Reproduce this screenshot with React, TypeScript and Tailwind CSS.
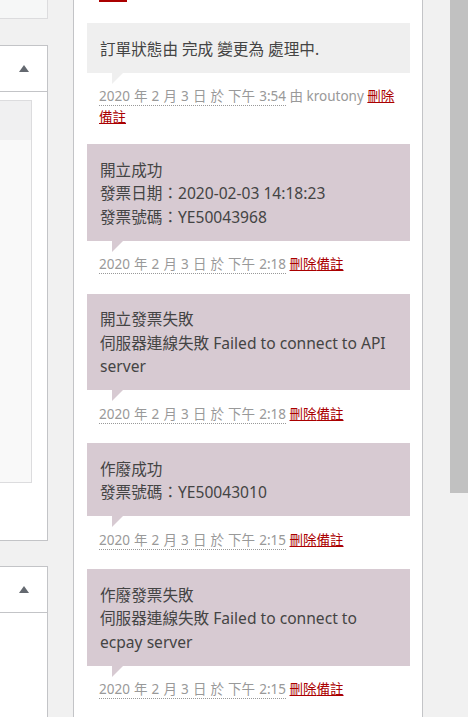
import React from 'react';

type Note = {
  kind: 'customer' | 'system';
  lines: string[];
  time: string;
  by?: string;
};

const notes: Note[] = [
  { kind: 'customer', lines: ['訂單狀態由 完成 變更為 處理中.'], time: '下午 3:54', by: 'kroutony' },
  { kind: 'system', lines: ['開立成功', '發票日期：2020-02-03 14:18:23', '發票號碼：YE50043968'], time: '下午 2:18' },
  { kind: 'system', lines: ['開立發票失敗', '伺服器連線失敗 Failed to connect to API', 'server'], time: '下午 2:18' },
  { kind: 'system', lines: ['作廢成功', '發票號碼：YE50043010'], time: '下午 2:15' },
  { kind: 'system', lines: ['作廢發票失敗', '伺服器連線失敗 Failed to connect to', 'ecpay server'], time: '下午 2:15' },
];

function Toggle() {
  return (
    <svg width="10" height="7" viewBox="0 0 10 7" className="ml-auto mr-[18px]">
      <polygon points="5,0 10,7 0,7" fill="#646970" />
    </svg>
  );
}

function NoteItem({ note }: { note: Note }) {
  const bg = note.kind === 'system' ? 'bg-[#d7cad2]' : 'bg-[#efefef]';
  const tip = note.kind === 'system' ? 'border-t-[#d7cad2]' : 'border-t-[#efefef]';
  return (
    <li className="list-none">
      <div className={`relative ${bg} px-[13px] pt-[14.5px] pb-[11.5px] text-[15.6px] leading-[23.5px] text-[#444]`}>
        {note.lines.map((l, i) => (
          <div key={i} className="whitespace-nowrap">{l}</div>
        ))}
        <span className={`absolute left-[25px] -bottom-[11px] h-0 w-0 border-t-[11px] border-r-[11px] border-r-transparent ${tip}`} />
      </div>
      <p className={`pl-[12px] pt-[13.5px] text-[13.5px] leading-[21px] text-[#999] ${note.by ? 'pb-[16px]' : 'pb-[18.5px]'}`}>
        <abbr className="no-underline border-b border-dotted border-[#999] [word-spacing:0.6px]" title="2020-02-03">
          2020 年 2 月 3 日 於 {note.time}
        </abbr>{' '}
        {note.by && <>由 {note.by} </>}
        <a className="text-[#a00] underline">
          刪除{note.by && <br />}備註
        </a>
      </p>
    </li>
  );
}

export default function App() {
  return (
    <div className="flex h-[717px] w-[468px] overflow-hidden bg-[#f1f1f1] font-['Noto_Sans','Noto_Sans_CJK_TC',sans-serif]">
      {/* main column, mostly cut off */}
      <div className="flex w-[48px] shrink-0 flex-col">
        <div className="h-[19px] border-b border-r border-[#dcdcde] bg-[#f6f7f7]" />
        <div className="mt-[26px] flex h-[496px] flex-col border-y border-r border-[#c3c4c7] bg-white">
          <div className="flex h-[46px] items-center border-b border-[#c3c4c7]">
            <Toggle />
          </div>
          <div className="mt-[8px] flex h-[383px] w-[32px] flex-col border-y border-r border-[#dcdcde]">
            <div className="h-[39px] bg-[#f0f0f1]" />
            <div className="flex-1 bg-[#f9f9f9]" />
          </div>
        </div>
        <div className="mt-[25px] flex flex-1 flex-col border-t border-r border-[#c3c4c7] bg-white">
          <div className="flex h-[46px] items-center border-b border-[#c3c4c7]">
            <Toggle />
          </div>
        </div>
      </div>

      <div className="w-[25px] shrink-0" />

      {/* order notes panel */}
      <div className="w-[350px] shrink-0 border-x border-[#c3c4c7] bg-white pl-[13px] pr-[12px]">
        <div className="ml-[12px] h-[2px] w-[28px] bg-[#a00]" />
        <ul className="mt-[21px]">
          {notes.map((n, i) => (
            <NoteItem key={i} note={n} />
          ))}
        </ul>
      </div>

      <div className="flex-1" />

      {/* scrollbar */}
      <div className="w-[18px] shrink-0">
        <div className="h-[493px] bg-[#c1c1c1]" />
      </div>
    </div>
  );
}
